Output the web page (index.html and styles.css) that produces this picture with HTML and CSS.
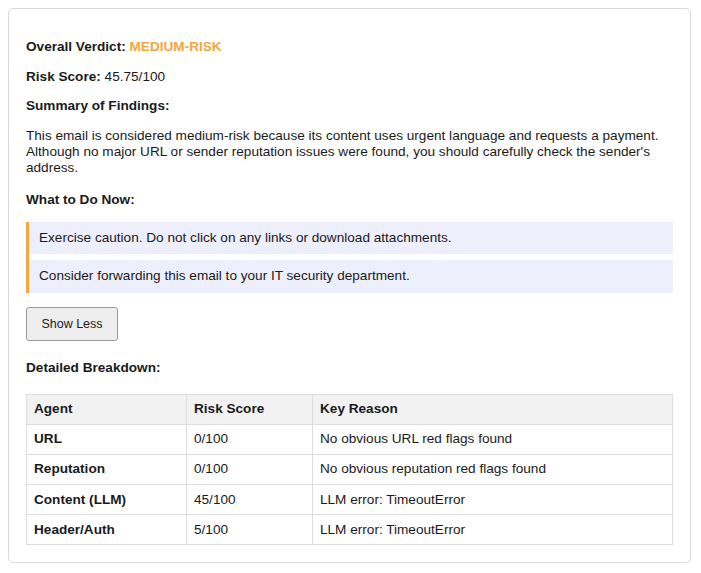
FILE: index.html
```html
<!DOCTYPE html>
<html lang="en">
<head>
<meta charset="utf-8">
<title>Analysis Result</title>
<link rel="stylesheet" href="styles.css">
</head>
<body>
<div class="card">
  <p class="line first"><strong>Overall Verdict:</strong> <span class="verdict">MEDIUM-RISK</span></p>
  <p class="line"><strong>Risk Score:</strong> 45.75/100</p>
  <p class="line"><strong>Summary of Findings:</strong></p>
  <p class="line">This email is considered medium-risk because its content uses urgent language and requests a payment. Although no major URL or sender reputation issues were found, you should carefully check the sender's address.</p>
  <h4 class="heading todo">What to Do Now:</h4>
  <ul class="actions">
    <li class="action">Exercise caution. Do not click on any links or download attachments.</li>
    <li class="action">Consider forwarding this email to your IT security department.</li>
  </ul>
  <button class="toggle" type="button">Show Less</button>
  <h4 class="heading breakdown">Detailed Breakdown:</h4>
  <table class="details">
    <thead>
      <tr><th class="c1">Agent</th><th class="c2">Risk Score</th><th class="c3">Key Reason</th></tr>
    </thead>
    <tbody>
      <tr><th class="rowhead">URL</th><td>0/100</td><td>No obvious URL red flags found</td></tr>
      <tr><th class="rowhead">Reputation</th><td>0/100</td><td>No obvious reputation red flags found</td></tr>
      <tr><th class="rowhead">Content (LLM)</th><td>45/100</td><td>LLM error: TimeoutError</td></tr>
      <tr><th class="rowhead">Header/Auth</th><td>5/100</td><td>LLM error: TimeoutError</td></tr>
    </tbody>
  </table>
</div>
</body>
</html>
```

FILE: styles.css
```css
html, body {
  background: #ffffff;
}
body {
  margin: 8px 10px 8px 8px;
  font-family: "Liberation Sans", Arial, sans-serif;
  font-size: 13.6px;
  color: #1a1a1a;
}
.card {
  border: 1px solid #d8d8d8;
  border-radius: 5px;
  padding: 15px 17px 17px 17px;
  box-shadow: 0 1px 2px rgba(0,0,0,0.05);
}
.line {
  margin: 13.5px 0;
  line-height: 16px;
}
.line.first {
  margin-top: 15px;
}
.verdict {
  color: #f4a640;
  font-weight: bold;
}
.heading {
  font-size: 13.6px;
  line-height: 16px;
  font-weight: bold;
  margin: 0;
}
.todo {
  margin-top: 16px;
  margin-bottom: 14px;
}
.actions {
  list-style: none;
  margin: 0;
  padding: 0;
  border-left: 3px solid #f2a73f;
}
.action {
  background: #eeeffc;
  padding: 8px 10px 8.5px 10px;
  line-height: 16px;
}
.action + .action {
  margin-top: 6px;
}
.toggle {
  display: block;
  margin-top: 14.5px;
  width: 92px;
  height: 34px;
  font-family: "Liberation Sans", Arial, sans-serif;
  font-size: 12.5px;
  color: #222;
  background: #ededed;
  border: 1px solid #9a9a9a;
  border-radius: 3px;
  padding: 0;
}
.breakdown {
  margin-top: 18.5px;
  margin-bottom: 18px;
}
.details {
  width: 100%;
  border-collapse: collapse;
  table-layout: fixed;
}
.details th, .details td {
  border: 1px solid #dddddd;
  padding: 6.6px 7px;
  text-align: left;
  line-height: 16px;
  font-size: 13.6px;
}
.details thead th {
  background: #f2f2f2;
}
.c1 { width: 145px; }
.c2 { width: 111px; }
.rowhead {
  font-weight: bold;
}
```
